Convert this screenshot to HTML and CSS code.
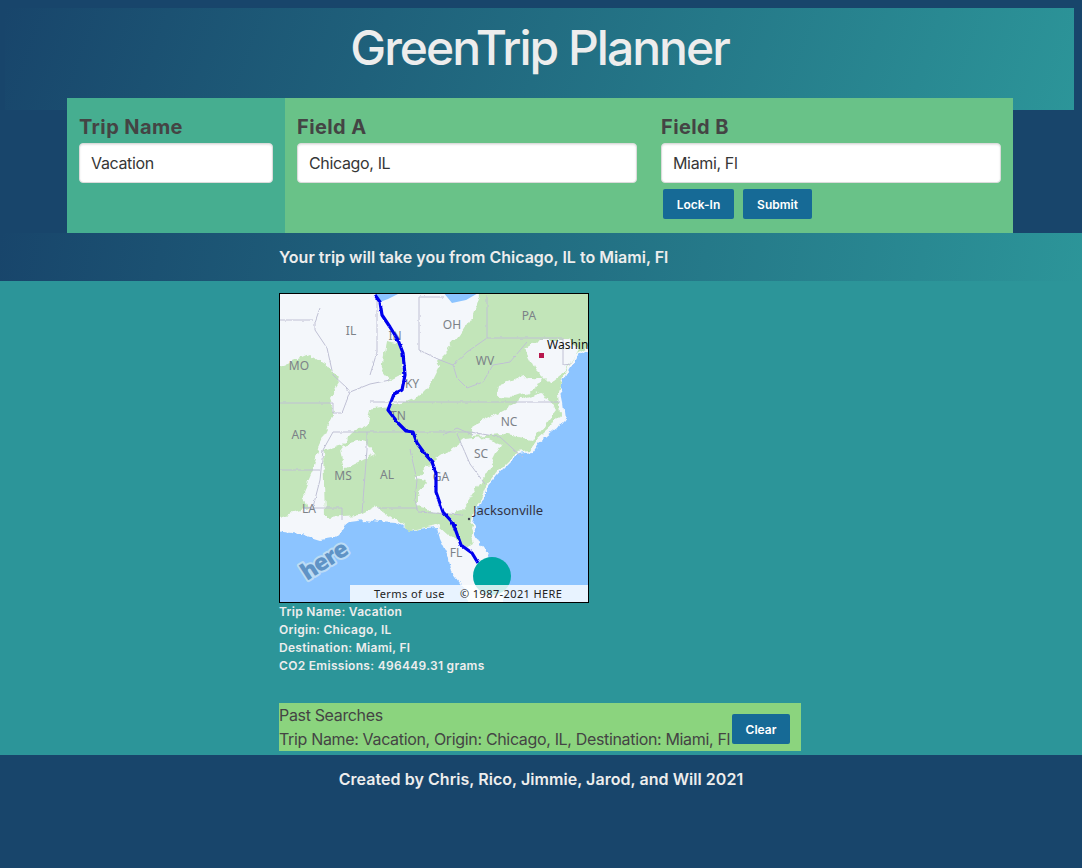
FILE: index.html
```html
<!DOCTYPE html>
<html>
<head>
  <title>GreenTrip Planner</title>
  <link rel="stylesheet" href="styles.css">
</head>
<body>
  <header class="hero">
    <h1>GreenTrip Planner</h1>
  </header>

  <form class="trip-form">
    <div class="col col-name">
      <label>Trip Name</label>
      <input type="text" value="Vacation">
    </div>
    <div class="col-fields">
      <div class="col">
        <label>Field A</label>
        <input type="text" value="Chicago, IL">
      </div>
      <div class="col">
        <label>Field B</label>
        <input type="text" value="Miami, Fl">
        <div class="buttons">
          <button type="button" class="btn btn-lock">Lock-In</button>
          <button type="button" class="btn btn-submit">Submit</button>
        </div>
      </div>
    </div>
  </form>

  <div class="banner">Your trip will take you from Chicago, IL to Miami, Fl</div>

  <main class="results">
    <svg class="map" viewBox="0 0 308 308" width="308" height="308">
      <defs>
        <filter id="rough" x="-5%" y="-5%" width="110%" height="110%">
          <feTurbulence type="fractalNoise" baseFrequency="0.09" numOctaves="3" seed="4"/>
          <feDisplacementMap in="SourceGraphic" scale="9" xChannelSelector="R" yChannelSelector="G"/>
        </filter>
        <filter id="jag" x="-5%" y="-5%" width="110%" height="110%">
          <feTurbulence type="fractalNoise" baseFrequency="0.2" numOctaves="2" seed="2"/>
          <feDisplacementMap in="SourceGraphic" scale="2.5" xChannelSelector="R" yChannelSelector="G"/>
        </filter>
      </defs>
      <!-- sea -->
      <rect width="308" height="308" fill="#8cc4ff"/>
      <!-- land -->
      <path filter="url(#rough)" fill="#f4f7fb" d="M-12 -12H320V48L297 63L287 81L280 94L283 108L285 123L277 134L260 148L253 158L237 160L222 175L207 193L197 216L193 236L200 250L207 259L215 275L223 291V320H190L183 292L173 279L170 266L160 245L157 233L145 234L133 236L115 229L100 228L85 226L70 228L60 236L52 244L40 246L20 240L-12 236Z"/>
      <!-- green -->
      <g filter="url(#rough)" fill="#c2e5b9">
        <path d="M204 -12H320V46L295 61L285 80L278 100L280 120L273 132L257 146L250 156L236 158L220 174L205 192L196 214L191 236L195 248L187 253L170 243L157 231L130 236L97 213L80 221L45 223L44 189L43 156L60 151L73 138L87 131L90 114L127 108L137 104L150 91L160 71L157 66L167 56L180 41L193 21Z"/>
        <path d="M-12 78L30 61L47 71L60 88L50 104L55 118L40 150L33 176L23 199L28 215L-12 226Z"/>
        <path d="M105 48L118 50L123 60L124 80L110 87L101 76Z"/>
      </g>
      <!-- pale patches inside the green -->
      <g filter="url(#rough)" fill="#f4f7fb">
        <path d="M165 160L185 145L205 143L222 150L212 170L200 190L190 205L183 215L163 220L137 213L137 200L147 188L135 186L150 170Z"/>
        <path d="M190 134L200 128L225 115L245 103L262 98L276 118L267 130L253 146L223 140L193 142Z"/>
        <path d="M245 55L262 45L290 45L298 56L285 78L270 90L255 75Z"/>
        <path d="M218 92L246 82L262 84L256 96L236 103L216 102Z"/>
        <path d="M60 152L85 145L95 160L75 170L65 175Z"/>
      </g>
      <!-- lakes -->
      <path fill="#8cc4ff" d="M94 -2H122L108 5L100 8ZM163 -2H200L186 6L172 9Z"/>
      <!-- state lines -->
      <g fill="none" stroke="#bfc0d4" stroke-width="1" filter="url(#jag)">
        <path d="M0 26H33M40 14L35 28V36L47 54L53 81L67 94L70 98L62 119H53V109H0"/>
        <path d="M97 1V58L90 81M70 98L90 90L110 86"/>
        <path d="M139 3V56L160 66L173 71L187 58L207 44V1M207 44H283V71L292 70"/>
        <path d="M173 71L177 84L187 94L203 88L213 71L230 68L247 48"/>
        <path d="M90 108H280M53 138H190L220 143L243 164M163 141L177 134L193 141"/>
        <path d="M130 156L137 186L135 206L138 218L183 221M97 214H137M87 138V156L82 219"/>
        <path d="M0 176H40M53 138L43 156L40 186L33 213L23 214H62V226"/>
        <path d="M177 140L190 170L205 190"/>
        <path d="M139 3H164"/>
      </g>
      <!-- labels -->
      <g class="map-state">
        <text x="71" y="41">IL</text>
        <text x="115" y="46">IN</text>
        <text x="172" y="35">OH</text>
        <text x="249" y="26">PA</text>
        <text x="205" y="71">WV</text>
        <text x="19" y="76">MO</text>
        <text x="132" y="94">KY</text>
        <text x="118" y="126">TN</text>
        <text x="229" y="132">NC</text>
        <text x="19" y="145">AR</text>
        <text x="201" y="164">SC</text>
        <text x="63" y="186">MS</text>
        <text x="107" y="185">AL</text>
        <text x="161" y="187">GA</text>
        <text x="29" y="219">LA</text>
        <text x="176" y="263">FL</text>
      </g>
      <!-- route -->
      <polyline filter="url(#jag)" fill="none" stroke="#0000ee" stroke-width="3.2" stroke-linejoin="round" points="95,1 100,8 102,21 110,33 118,46 123,59 125,81 122,96 114,100 108,116 118,129 126,137 133,138 137,149 145,160 152,168 156,179 156,198 163,218 173,229 181,251 192,259 198,269"/>
      <circle cx="212" cy="282" r="19" fill="#00a8a3"/>
      <rect x="259" y="59" width="5" height="5" fill="#b8184e"/>
      <circle cx="189" cy="225" r="1.2" fill="#445"/>
      <text class="map-city" x="267" y="55">Washin</text>
      <text class="map-jax" x="193" y="221">Jacksonville</text>
      <text class="map-logo" transform="translate(27 287) rotate(-33)">here</text>
      <rect x="70" y="291" width="238" height="17" fill="#fff" opacity=".8"/>
      <text class="map-terms" x="94" y="304">Terms of use</text>
      <text class="map-terms" x="180" y="304">© 1987-2021 HERE</text>
    </svg>

    <div class="trip-info">
      <p>Trip Name: Vacation</p>
      <p>Origin: Chicago, IL</p>
      <p>Destination: Miami, Fl</p>
      <p>CO2 Emissions: 496449.31 grams</p>
    </div>

    <section class="past">
      <div class="past-text">
        <p>Past Searches</p>
        <p>Trip Name: Vacation, Origin: Chicago, IL, Destination: Miami, Fl</p>
      </div>
      <button type="button" class="btn btn-clear">Clear</button>
    </section>
  </main>

  <footer class="footer">Created by Chris, Rico, Jimmie, Jarod, and Will 2021</footer>
</body>
</html>
```

FILE: styles.css
```css
body {
  font-family: Inter, "Liberation Sans", sans-serif;
  margin: 0;
  padding: 0;
  background-color: #18456b;
  color: #ededed;
}

p {
  margin: 0;
}

.hero {
  height: 102px;
  margin: 8px 8px -12px 5px;
  padding-top: 8px;
  box-sizing: border-box;
  text-align: center;
  background: linear-gradient(110deg, #18456b, #2c9599);
}

.hero h1 {
  margin: 0;
  font-size: 48px;
  line-height: 64px;
  font-weight: 500;
  letter-spacing: -2px;
  color: #ededed;
}

.trip-form {
  position: relative;
  display: flex;
  width: 946px;
  height: 135px;
  margin-left: 67px;
}

.col-name {
  width: 218px;
  background-color: #46ae90;
}

.col-fields {
  flex: 1;
  display: flex;
  gap: 0;
  background-color: #69c288;
}

.col {
  box-sizing: border-box;
  padding: 16px 12px 0;
}

.col-fields .col {
  width: 364px;
}

.col label {
  display: block;
  height: 29px;
  font-size: 20px;
  line-height: 26px;
  font-weight: 700;
  letter-spacing: 0.4px;
  color: #444;
}

.col input {
  display: block;
  width: 100%;
  height: 40px;
  padding: 0 11px;
  box-sizing: border-box;
  border: 1px solid #dbdbdb;
  border-radius: 4px;
  background-color: #fff;
  box-shadow: inset 0 1px 2px rgba(10, 10, 10, 0.1);
  font-family: inherit;
  font-size: 16px;
  letter-spacing: -0.35px;
  color: #363636;
}

.buttons {
  display: flex;
  gap: 9px;
  margin: 6px 0 0 2px;
}

.btn {
  height: 30px;
  padding: 0;
  border: none;
  border-radius: 2px;
  background-color: #166a96;
  color: #fff;
  font-family: inherit;
  font-size: 12px;
  font-weight: 600;
}

.btn-lock {
  width: 71px;
}

.btn-submit {
  width: 69px;
}

.btn-clear {
  width: 58px;
  margin: 4px 0 0 2px;
}

.banner {
  height: 48px;
  padding-left: 279px;
  font-size: 16px;
  line-height: 48px;
  font-weight: 600;
  background: linear-gradient(100deg, #18456b, #2c9599);
}

.results {
  height: 474px;
  box-sizing: border-box;
  padding: 12px 0 0 279px;
  background-color: #2c9599;
}

.map {
  display: block;
  box-sizing: content-box;
  border: 1px solid #000;
}

.map-state text {
  font-family: "Noto Sans", sans-serif;
  font-size: 12px;
  fill: #7c8288;
  text-anchor: middle;
}

.map-city {
  font-family: "Noto Sans", sans-serif;
  font-size: 12px;
  fill: #111;
}

.map-jax {
  font-family: "Noto Sans", sans-serif;
  font-size: 13px;
  fill: #334;
}

.map-logo {
  font-family: "Open Sans", sans-serif;
  font-size: 23px;
  font-weight: 800;
  fill: #5f93c6;
  stroke: #bcdcf5;
  stroke-width: 4;
  stroke-linejoin: round;
  paint-order: stroke;
  letter-spacing: -1px;
}

.map-terms {
  font-family: "Noto Sans", sans-serif;
  font-size: 11px;
  letter-spacing: 0.4px;
  fill: #222;
}

.trip-info {
  font-size: 12px;
  line-height: 18px;
  font-weight: 600;
  letter-spacing: 0.3px;
}

.past {
  display: flex;
  align-items: center;
  width: 522px;
  height: 48px;
  margin-top: 28px;
  background-color: #8bd47e;
  color: #444;
}

.past-text {
  font-size: 16px;
  line-height: 24px;
  letter-spacing: -0.34px;
  white-space: nowrap;
}

.footer {
  height: 113px;
  padding-top: 12px;
  box-sizing: border-box;
  text-align: center;
  font-size: 16px;
  line-height: 24px;
  font-weight: 600;
  letter-spacing: 0.05px;
}
```
